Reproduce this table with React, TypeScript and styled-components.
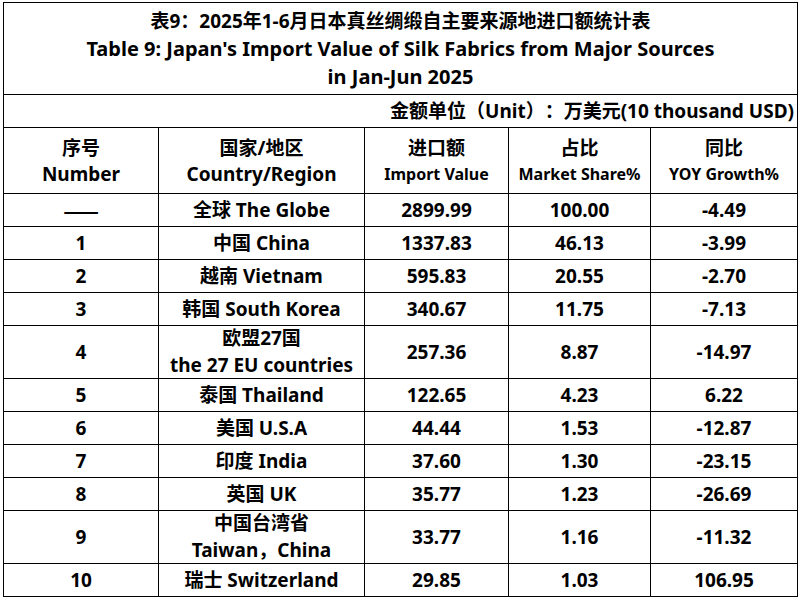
import React from "react";
import styled, { createGlobalStyle } from "styled-components";

const Global = createGlobalStyle`
  html, body { margin: 0; padding: 0; background: #ffffff; }
  body { font-family: "Noto Sans", "Noto Sans CJK SC", sans-serif; color: #000; }
`;

const Page = styled.div`
  padding: 2px 0 0 3px;
`;

const Grid = styled.div`
  display: grid;
  grid-template-columns: 155px 206px 144px 142px 147px;
  width: 795px;
  box-sizing: border-box;
  border-left: 1px solid #000;
  border-top: 1px solid #000;
  font-weight: 700;
  text-spacing-trim: space-all;
`;

const Cell = styled.div<{ $h: number; $span?: number }>`
  box-sizing: border-box;
  height: ${(p) => p.$h}px;
  grid-column: span ${(p) => p.$span ?? 1};
  border-right: 1px solid #000;
  border-bottom: 1px solid #000;
  display: flex;
  flex-direction: column;
  align-items: center;
  justify-content: center;
  text-align: center;
  font-size: 19px;
  line-height: 27px;
  white-space: nowrap;
`;

const TitleCell = styled(Cell)`
  font-size: 20px;
  line-height: 27.5px;
  padding-top: 1px;
`;

const TitleCn = styled.span`
  font-size: 19px;
`;

const UnitCell = styled(Cell)`
  align-items: flex-end;
  padding-right: 3px;
`;

const HeadCell = styled(Cell)`
  line-height: 26px;
`;

const DashCell = styled(Cell)`
  font-family: "Noto Sans CJK SC", sans-serif;
  font-size: 21px;
`;

const SubLabel = styled.span<{ $small?: boolean }>`
  font-size: ${(p) => (p.$small ? "16px" : "19px")};
`;

type Row = {
  no: string;
  region: string[];
  value: string;
  share: string;
  yoy: string;
};

const rows: Row[] = [
  { no: "——", region: ["全球 The Globe"], value: "2899.99", share: "100.00", yoy: "-4.49" },
  { no: "1", region: ["中国 China"], value: "1337.83", share: "46.13", yoy: "-3.99" },
  { no: "2", region: ["越南 Vietnam"], value: "595.83", share: "20.55", yoy: "-2.70" },
  { no: "3", region: ["韩国 South Korea"], value: "340.67", share: "11.75", yoy: "-7.13" },
  { no: "4", region: ["欧盟27国", "the 27 EU countries"], value: "257.36", share: "8.87", yoy: "-14.97" },
  { no: "5", region: ["泰国 Thailand"], value: "122.65", share: "4.23", yoy: "6.22" },
  { no: "6", region: ["美国 U.S.A"], value: "44.44", share: "1.53", yoy: "-12.87" },
  { no: "7", region: ["印度 India"], value: "37.60", share: "1.30", yoy: "-23.15" },
  { no: "8", region: ["英国 UK"], value: "35.77", share: "1.23", yoy: "-26.69" },
  { no: "9", region: ["中国台湾省", "Taiwan，China"], value: "33.77", share: "1.16", yoy: "-11.32" },
  { no: "10", region: ["瑞士 Switzerland"], value: "29.85", share: "1.03", yoy: "106.95" },
];

export default function App() {
  return (
    <Page>
      <Global />
      <Grid>
        <TitleCell $h={92} $span={5}>
          <TitleCn>表9：2025年1-6月日本真丝绸缎自主要来源地进口额统计表</TitleCn>
          <span>Table 9: Japan's Import Value of Silk Fabrics from Major Sources</span>
          <span>in Jan-Jun 2025</span>
        </TitleCell>
        <UnitCell $h={33} $span={5}>
          <span>金额单位（Unit）：万美元(10 thousand USD)</span>
        </UnitCell>
        <HeadCell $h={66}>
          <span>序号</span>
          <SubLabel>Number</SubLabel>
        </HeadCell>
        <HeadCell $h={66}>
          <span>国家/地区</span>
          <SubLabel>Country/Region</SubLabel>
        </HeadCell>
        <HeadCell $h={66}>
          <span>进口额</span>
          <SubLabel $small>Import Value</SubLabel>
        </HeadCell>
        <HeadCell $h={66}>
          <span>占比</span>
          <SubLabel $small>Market Share%</SubLabel>
        </HeadCell>
        <HeadCell $h={66}>
          <span>同比</span>
          <SubLabel $small>YOY Growth%</SubLabel>
        </HeadCell>
        {rows.map((r) => {
          const h = r.region.length > 1 ? 53 : 33;
          const NoCell = r.no === "——" ? DashCell : Cell;
          return (
            <React.Fragment key={r.no}>
              <NoCell $h={h}>{r.no}</NoCell>
              <Cell $h={h}>
                {r.region.map((t) => (
                  <span key={t}>{t}</span>
                ))}
              </Cell>
              <Cell $h={h}>{r.value}</Cell>
              <Cell $h={h}>{r.share}</Cell>
              <Cell $h={h}>{r.yoy}</Cell>
            </React.Fragment>
          );
        })}
      </Grid>
    </Page>
  );
}
